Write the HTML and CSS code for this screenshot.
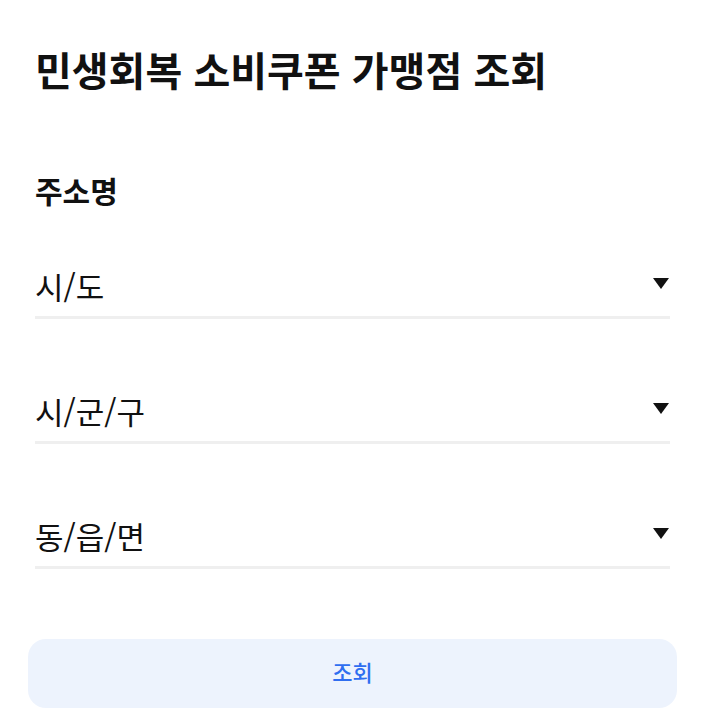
FILE: index.html
```html
<!DOCTYPE html>
<html lang="ko">
<head>
  <meta charset="UTF-8">
  <meta name="viewport" content="width=device-width, initial-scale=1.0">
  <title>민생회복 소비쿠폰 가맹점 조회</title>
  <link rel="stylesheet" href="styles.css">
</head>
<body>
    <div class="page">
        <h1 class="title">민생회복 소비쿠폰 가맹점 조회</h1>

        <div class="section">
            <h2 class="label">주소명</h2>
            <div class="select">
                <span>시/도</span>
                <span class="arrow"></span>
            </div>
            <div class="select">
                <span>시/군/구</span>
                <span class="arrow"></span>
            </div>
            <div class="select">
                <span>동/읍/면</span>
                <span class="arrow"></span>
            </div>
        </div>

        <button class="btnSearch">조회</button>
    </div>
</body>
</html>
```

FILE: styles.css
```css
* {
    margin: 0;
    padding: 0;
    box-sizing: border-box;
    font-family: "Noto Sans CJK KR", "Noto Sans", sans-serif;
}
body {
    background-color: #fff;
    color: #111;
}
.page {
    padding: 39px 25px 0 28px;
}
.title {
    font-size: 40px;
    font-weight: 700;
    line-height: 60px;
    padding-left: 7px;
}
.section {
    margin-top: 71px;
    padding: 0 7px;
}
.label {
    font-size: 30px;
    font-weight: 600;
    line-height: 40px;
}
.select {
    display: flex;
    justify-content: space-between;
    align-items: center;
    height: 65px;
    margin-top: 60px;
    border-bottom: 3px solid #efefef;
    font-size: 31px;
}
.select:first-of-type {
    margin-top: 44px;
}
.arrow {
    width: 0;
    height: 0;
    border-left: 8px solid transparent;
    border-right: 8px solid transparent;
    border-top: 11px solid #111;
    margin: 0 1px 4px 0;
}
.btnSearch {
    display: block;
    width: 100%;
    height: 69px;
    margin-top: 70px;
    padding-bottom: 5px;
    border: none;
    border-radius: 18px;
    background-color: #edf3fd;
    color: #2f6ef0;
    font-size: 22px;
    font-weight: 500;
}
```
